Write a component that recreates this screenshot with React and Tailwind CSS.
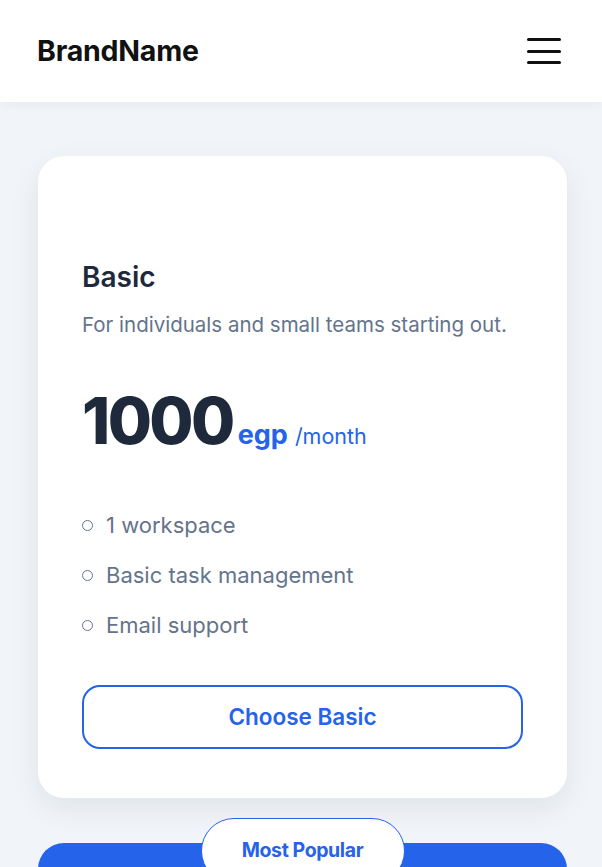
const basicFeatures = ['1 workspace', 'Basic task management', 'Email support'];

function Header() {
  return (
    <header className="relative z-10 flex h-[102px] items-center justify-between bg-white pl-[37px] pr-[41px] shadow-[0_2px_10px_rgba(15,23,42,0.05)]">
      <span className="text-[28.5px] font-bold tracking-[-0.2px] text-[#111]">BrandName</span>
      <button className="flex h-[26px] w-[34px] flex-col justify-between" aria-label="menu">
        <span className="h-[3px] w-full rounded-sm bg-[#111]" />
        <span className="h-[3px] w-full rounded-sm bg-[#111]" />
        <span className="h-[3px] w-full rounded-sm bg-[#111]" />
      </button>
    </header>
  );
}

function BasicCard() {
  return (
    <div className="rounded-[26px] bg-white px-[44px] pb-[49px] pt-[104px] shadow-[0_10px_30px_rgba(15,23,42,0.08)]">
      <h3 className="text-[28px] font-semibold leading-[34px] text-[#1e293b]">Basic</h3>
      <p className="mt-[16px] text-[20.5px] leading-[30px] text-[#64748b]">For individuals and small teams starting out.</p>
      <div className="mt-[43px] flex items-baseline">
        <span className="text-[64px] font-extrabold leading-[76px] tracking-[-2.6px] text-[#1e293b]">1000</span>
        <span className="ml-[5px] text-[27px] font-bold text-[#2563eb]">egp</span>
        <span className="ml-[7px] text-[21.5px] text-[#2563eb]">/month</span>
      </div>
      <ul className="mt-[50px] flex flex-col gap-[18px]">
        {basicFeatures.map((f) => (
          <li key={f} className="flex items-center text-[22px] leading-[32px] text-[#64748b]">
            <span className="mr-[13px] inline-block h-[11px] w-[11px] rounded-full border-[1.5px] border-[#64748b]" />
            {f}
          </li>
        ))}
      </ul>
      <button className="mt-[44px] flex h-[64px] w-full items-center justify-center rounded-[18px] border-2 border-[#2563eb] text-[22.5px] font-semibold text-[#2563eb]">
        Choose Basic
      </button>
    </div>
  );
}

function ProCard() {
  return (
    <div className="relative h-[200px] rounded-[26px] bg-[#2563eb]">
      <div className="absolute left-1/2 top-[-25px] flex h-[66px] w-[204px] -translate-x-1/2 items-start justify-center rounded-full border border-[#2563eb] bg-white pt-[17px]">
        <span className="text-[19.5px] font-bold tracking-[-0.4px] text-[#2563eb]">Most Popular</span>
      </div>
    </div>
  );
}

export default function App() {
  return (
    <div className="min-h-screen overflow-hidden bg-[#f1f5f9] font-['Inter',sans-serif]">
      <Header />
      <main className="flex flex-col gap-[45px] pl-[38px] pr-[35px] pt-[54px]">
        <BasicCard />
        <ProCard />
      </main>
    </div>
  );
}
